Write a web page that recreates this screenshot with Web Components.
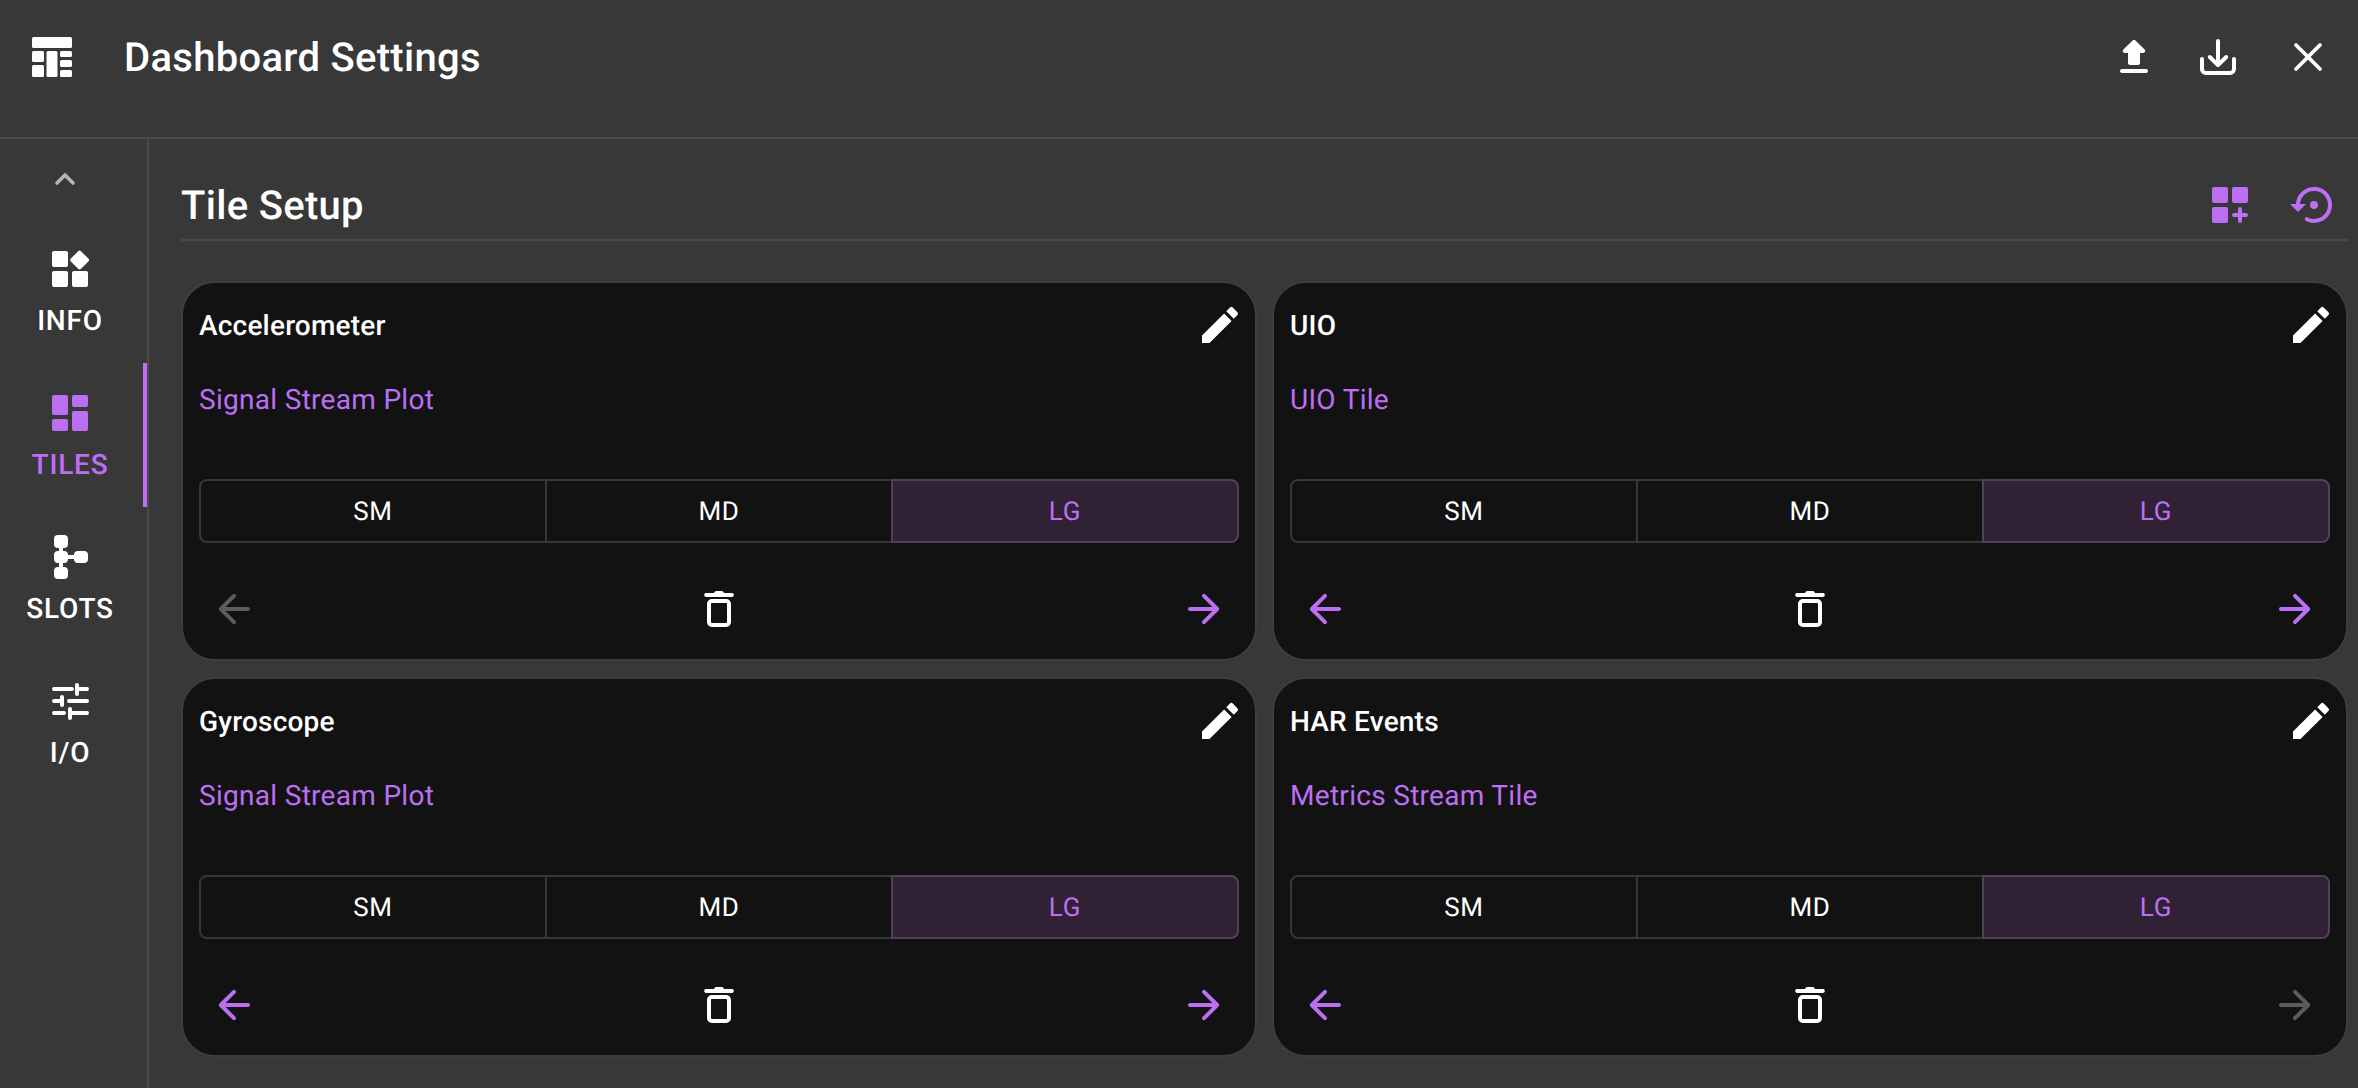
<!DOCTYPE html>
<html lang="en"><head><meta charset="utf-8"><title>Dashboard Settings</title>
<style>
html,body{margin:0;height:100%;background:#383838;overflow:hidden}
body{font-family:Roboto,"Liberation Sans",sans-serif;color:#fff;text-rendering:geometricPrecision}
</style></head>
<body>
<settings-app></settings-app>
<script>
const P='#bd6ff3';
const ICONS={
 logo:`<g fill="currentColor"><rect x="0" y="0" width="40" height="11" rx="1.5"/><rect x="0" y="14" width="12" height="11" rx="1.5"/><rect x="0" y="28" width="12" height="12" rx="1.5"/><rect x="14.5" y="14" width="11" height="26" rx="1.5"/><rect x="28" y="14" width="12" height="6" rx="1.5"/><rect x="28" y="23" width="12" height="7" rx="1.5"/><rect x="28" y="33" width="12" height="7" rx="1.5"/></g>`,
 upload:`<path fill="currentColor" d="M10 16h4c.55 0 1-.45 1-1v-5h1.59c.89 0 1.34-1.08.71-1.71L12.71 3.7a.9959.9959 0 0 0-1.41 0L6.71 8.29c-.63.63-.19 1.71.7 1.71H9v5c0 .55.45 1 1 1zm-4 2h12c.55 0 1 .45 1 1s-.45 1-1 1H6c-.55 0-1-.45-1-1s.45-1 1-1z"/>`,
 download:`<g fill="none" stroke="currentColor" stroke-width="2" stroke-linecap="round" stroke-linejoin="round"><path d="M12 4v12M7.9 12 12 16.1 16.1 12"/><path d="M4 13v5a2 2 0 0 0 2 2h12a2 2 0 0 0 2-2v-5"/></g>`,
 close:`<path d="M6 6 18 18M18 6 6 18" fill="none" stroke="currentColor" stroke-width="1.9" stroke-linecap="round"/>`,
 addtile:`<g fill="currentColor"><rect x="3" y="3" width="8" height="8" rx="1"/><rect x="13" y="3" width="8" height="8" rx="1"/><rect x="3" y="13" width="8" height="8" rx="1"/></g><path d="M17 14v6M14 17h6" fill="none" stroke="currentColor" stroke-width="2" stroke-linecap="round"/>`,
 history:`<path d="M5 12A8 8 0 1 1 9.4 19.1" fill="none" stroke="currentColor" stroke-width="2" stroke-linecap="round"/><path fill="currentColor" d="M1 11.5h8l-4 4z"/><circle cx="13" cy="12" r="2" fill="currentColor"/>`,
 info:`<g fill="currentColor"><rect x="3" y="3" width="8" height="8" rx="1"/><rect x="3" y="13" width="8" height="8" rx="1"/><rect x="13" y="13" width="8" height="8" rx="1"/><rect x="13.2" y="3.9" width="7.2" height="7.2" rx="1" transform="rotate(45 16.8 7.5)"/></g>`,
 tiles:`<g fill="currentColor"><rect x="3" y="3" width="8" height="10" rx="1"/><rect x="3" y="15" width="8" height="6" rx="1"/><rect x="13" y="3" width="8" height="6" rx="1"/><rect x="13" y="11" width="8" height="10" rx="1"/></g>`,
 slots:`<g fill="currentColor" transform="scale(.5)"><rect x="8" y="2" width="14" height="13" rx="4"/><rect x="8" y="18" width="14" height="12" rx="4"/><rect x="8" y="34" width="14" height="12" rx="4"/><rect x="28" y="18" width="14" height="12" rx="4"/><rect x="13" y="14" width="4" height="21"/><rect x="21" y="22" width="8" height="4"/></g>`,
 io:`<g fill="none" stroke="currentColor" stroke-width="4" stroke-linecap="round" transform="scale(.5)"><path d="M8 12h18M31 8v9M31 12h10M8 24h8M16 20v8M23 24h18M8 36h10M24 32v9M24 36h17"/></g>`,
 chevron:`<path d="M8 14 12 10 16 14" fill="none" stroke="currentColor" stroke-width="1.8" stroke-linecap="round" stroke-linejoin="round"/>`,
 edit:`<path fill="currentColor" d="M3 17.25V21h3.75L17.81 9.94l-3.75-3.75L3 17.25zM20.71 7.04c.39-.39.39-1.02 0-1.41l-2.34-2.34a.9959.9959 0 0 0-1.41 0l-1.83 1.83 3.75 3.75 1.83-1.83z"/>`,
 back:`<path fill="currentColor" d="M19 11H7.83l4.88-4.88c.39-.39.39-1.03 0-1.42a.9959.9959 0 0 0-1.41 0l-6.59 6.59c-.39.39-.39 1.02 0 1.41l6.59 6.59c.39.39 1.02.39 1.41 0 .39-.39.39-1.02 0-1.41L7.83 13H19c.55 0 1-.45 1-1s-.45-1-1-1z"/>`,
 forward:`<path fill="currentColor" transform="matrix(-1 0 0 1 24 0)" d="M19 11H7.83l4.88-4.88c.39-.39.39-1.03 0-1.42a.9959.9959 0 0 0-1.41 0l-6.59 6.59c-.39.39-.39 1.02 0 1.41l6.59 6.59c.39.39 1.02.39 1.41 0 .39-.39.39-1.02 0-1.41L7.83 13H19c.55 0 1-.45 1-1s-.45-1-1-1z"/>`,
 trash:`<path fill="currentColor" d="M9.5 4c.2-.6.6-1 1.2-1h2.6c.6 0 1 .4 1.2 1h3.9c.5 0 1 .3 1 .9 0 .7-.5 1.1-1 1.1H5.6c-.5 0-1-.4-1-1.1 0-.6.5-.9 1-.9z"/><rect x="7" y="8" width="10" height="12" rx="1.4" fill="none" stroke="currentColor" stroke-width="2"/>`
};
class El extends HTMLElement{
 render(css,html){const r=this.shadowRoot||this.attachShadow({mode:'open'});r.innerHTML=`<style>${css}</style>${html}`;return r;}
}
customElements.define('app-icon',class extends El{connectedCallback(){
 const n=this.getAttribute('name'),logo=n==='logo';
 this.render(`:host{display:block;width:${logo?40:48}px;height:${logo?40:48}px;flex:none;line-height:0}svg{display:block;width:100%;height:100%}`,
 `<svg viewBox="0 0 ${logo?'40 40':'24 24'}" aria-hidden="true">${ICONS[n]}</svg>`);
}});
customElements.define('app-header',class extends El{connectedCallback(){
 this.render(`:host{display:flex;align-items:center;height:114px;padding:0 26px 23px 32px;border-bottom:2px solid #4a4a4a;box-sizing:content-box}
 h1{margin:0 0 0 52px;padding-top:2px;font:500 40px/46px Roboto,sans-serif;letter-spacing:.3px;flex:1;color:#fff}
 .a{display:flex;color:#fff}.d{margin-left:36px}.c{margin-left:42px}`,
 `<app-icon name="logo"></app-icon><h1><slot></slot></h1><div class="a"><app-icon name="upload"></app-icon><app-icon class="d" name="download"></app-icon><app-icon class="c" name="close"></app-icon></div>`);
}});
customElements.define('nav-item',class extends El{connectedCallback(){
 const on=this.hasAttribute('active');
 this.render(`:host{display:flex;flex-direction:column;align-items:center;box-sizing:border-box;height:144px;padding:26px 7px 0 0;position:relative;color:${on?P:'#fff'}}
 span{font:500 28px/32px Roboto,sans-serif;letter-spacing:.8px;margin-top:12px}
 i{position:absolute;right:0;top:0;bottom:0;width:4px;background:${on?P:'transparent'}}`,
 `<app-icon name="${this.getAttribute('icon')}"></app-icon><span><slot></slot></span><i></i>`);
}});
customElements.define('side-nav',class extends El{connectedCallback(){
 this.render(`:host{display:block;width:147px;border-right:2px solid #4a4a4a;flex:none}
 .up{height:80px;display:flex;align-items:center;justify-content:center;padding-right:17px;color:#b4b4b4}`,
 `<div class="up"><app-icon name="chevron"></app-icon></div><slot></slot>`);
}});
customElements.define('size-toggle',class extends El{connectedCallback(){
 this.render(`:host{display:flex;height:64px;box-sizing:border-box;margin-top:64px}
 div{flex:1;display:flex;align-items:center;justify-content:center;box-sizing:border-box;padding-top:1px;font:400 26px/32px Roboto,sans-serif;letter-spacing:.74px;color:#fff;border:2px solid #373737;border-left-width:0}
 div:first-of-type{border-left-width:2px;border-radius:8px 0 0 8px}
 div.on{color:${P};background:#302234;border:2px solid #51405a;border-radius:0 8px 8px 0;margin-left:-2px}`,
 `<div>SM</div><div>MD</div><div class="on">LG</div>`);
}});
customElements.define('tile-card',class extends El{connectedCallback(){
 const dis=this.getAttribute('disabled')||'';
 const col=n=>dis===n?'#5c5c5c':P;
 this.render(`:host{display:flex;flex-direction:column;box-sizing:border-box;height:380px;padding:18px 16px 0;background:#121212;border:2px solid #3e3e3e;border-radius:34px}
 .t{display:flex;align-items:center;justify-content:space-between;height:48px;margin-right:-5px}
 h3{margin:1px 0 0;font:500 28px/32px Roboto,sans-serif;letter-spacing:.2px;color:#fff}
 p{margin:35px 0 0;font:400 28px/32px Roboto,sans-serif;letter-spacing:.3px;color:${P}}
 size-toggle{margin-top:63px}
 .f{display:flex;justify-content:space-between;padding:0 11px 0 11px;margin-top:42px}`,
 `<div class="t"><h3>${this.getAttribute('title')}</h3><app-icon name="edit" style="color:#fff"></app-icon></div>
 <p>${this.getAttribute('type')}</p><size-toggle></size-toggle>
 <div class="f"><app-icon name="back" style="color:${col('back')}"></app-icon><app-icon name="trash" style="color:#fff"></app-icon><app-icon name="forward" style="color:${col('forward')}"></app-icon></div>`);
 this.removeAttribute('title');
}});
customElements.define('tile-setup',class extends El{connectedCallback(){
 this.render(`:host{display:block;flex:1;min-width:0;padding:0 10px 0 32px}
 .h{display:flex;align-items:center;padding-top:42px;padding-bottom:10px;border-bottom:2px solid #4a4a4a;color:${P}}
 h2{margin:0;flex:1;padding-top:2px;font:500 40px/46px Roboto,sans-serif;letter-spacing:.3px;color:#fff}
 .h2i{margin-left:34px;margin-right:12px}
 .g{display:grid;grid-template-columns:1076px 1fr;column-gap:15px;row-gap:16px;margin-top:40px}`,
 `<div class="h"><h2>Tile Setup</h2><app-icon name="addtile"></app-icon><app-icon class="h2i" name="history"></app-icon></div><div class="g"><slot></slot></div>`);
}});
customElements.define('settings-app',class extends El{connectedCallback(){
 this.render(`:host{display:flex;flex-direction:column;height:1088px;background:#383838;color:#fff;font-family:Roboto,sans-serif}
 .b{display:flex;flex:1;min-height:0}`,
 `<app-header>Dashboard Settings</app-header><div class="b"><side-nav><nav-item icon="info">INFO</nav-item><nav-item icon="tiles" active>TILES</nav-item><nav-item icon="slots">SLOTS</nav-item><nav-item icon="io">I/O</nav-item></side-nav>
 <tile-setup><tile-card title="Accelerometer" type="Signal Stream Plot" disabled="back"></tile-card><tile-card title="UIO" type="UIO Tile"></tile-card><tile-card title="Gyroscope" type="Signal Stream Plot"></tile-card><tile-card title="HAR Events" type="Metrics Stream Tile" disabled="forward"></tile-card></tile-setup></div>`);
}});
</script>
</body></html>
